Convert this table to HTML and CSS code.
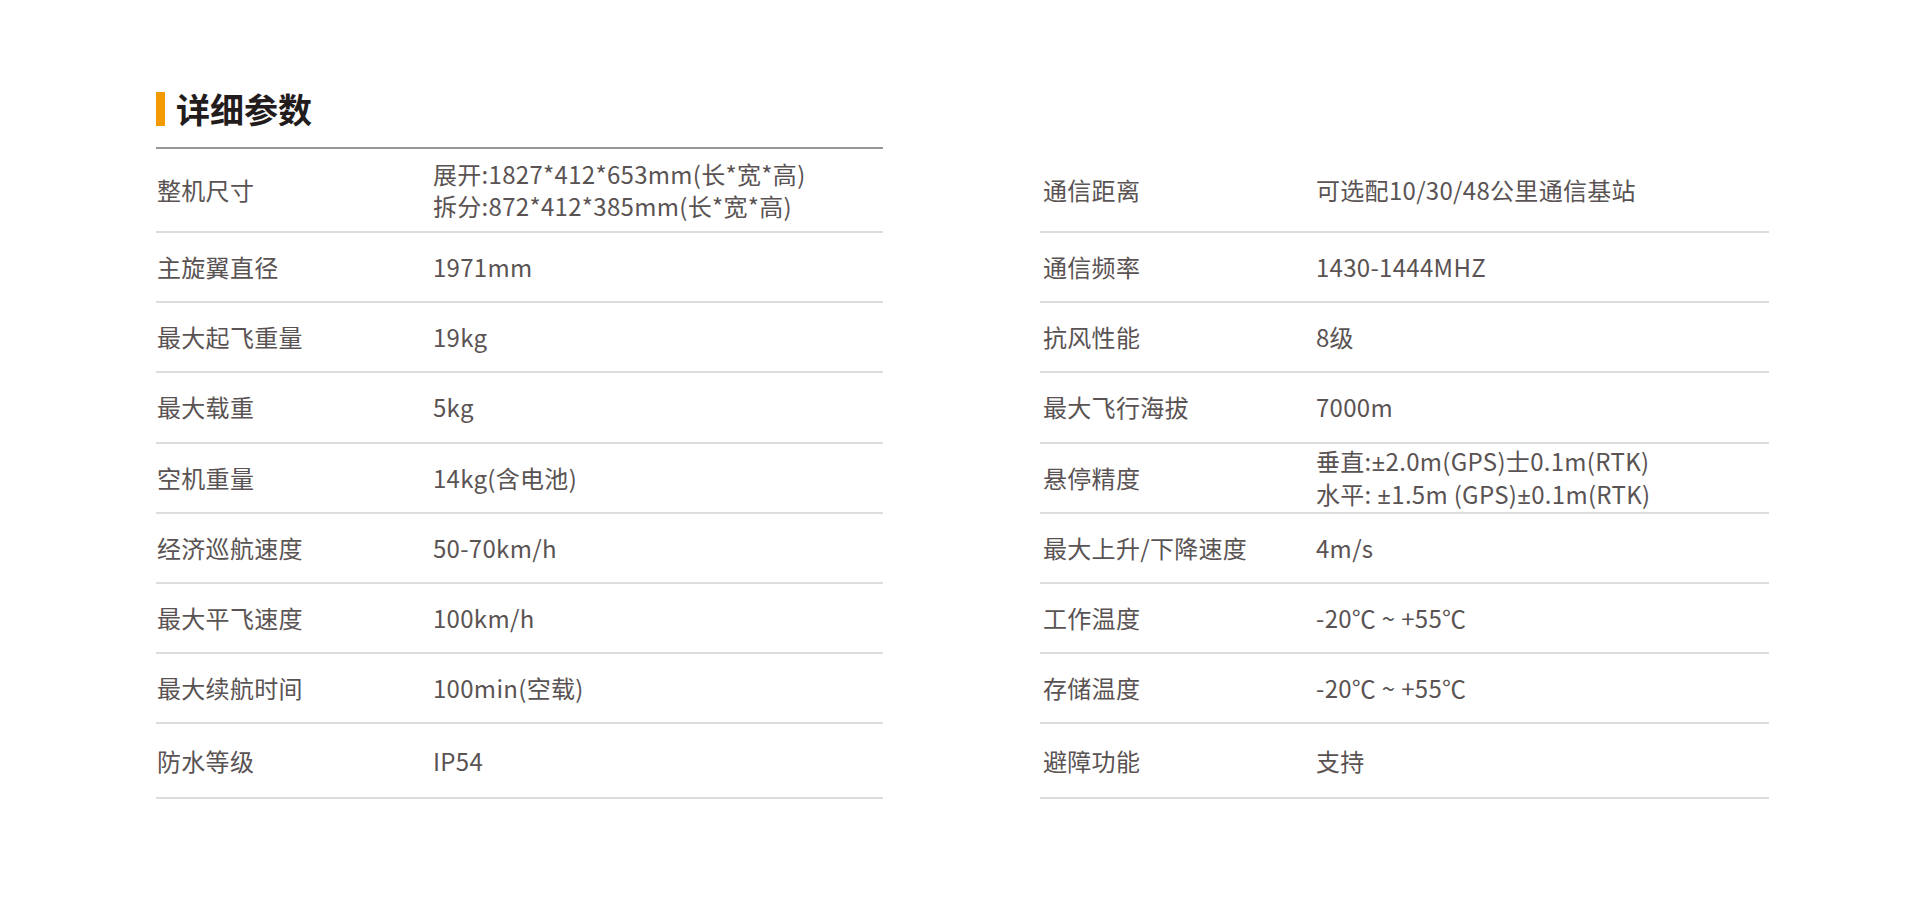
FILE: index.html
```html
<!DOCTYPE html>
<html lang="zh-CN">
<head>
<meta charset="utf-8">
<title>详细参数</title>
<link rel="stylesheet" href="styles.css">
</head>
<body>
<div class="page">
  <div class="heading">
    <span class="heading-bar"></span>
    <h2 class="heading-title">详细参数</h2>
  </div>
  <div class="tables">
    <div class="spec spec-left">
      <div class="row row-first"><div class="label">整机尺寸</div><div class="value">展开:1827*412*653mm(长*宽*高)<br>拆分:872*412*385mm(长*宽*高)</div></div>
      <div class="row"><div class="label">主旋翼直径</div><div class="value">1971mm</div></div>
      <div class="row"><div class="label">最大起飞重量</div><div class="value">19kg</div></div>
      <div class="row"><div class="label">最大载重</div><div class="value">5kg</div></div>
      <div class="row"><div class="label">空机重量</div><div class="value">14kg(含电池)</div></div>
      <div class="row"><div class="label">经济巡航速度</div><div class="value">50-70km/h</div></div>
      <div class="row"><div class="label">最大平飞速度</div><div class="value">100km/h</div></div>
      <div class="row"><div class="label">最大续航时间</div><div class="value">100min(空载)</div></div>
      <div class="row row-last"><div class="label">防水等级</div><div class="value">IP54</div></div>
    </div>
    <div class="spec spec-right">
      <div class="row row-first"><div class="label">通信距离</div><div class="value">可选配10/30/48公里通信基站</div></div>
      <div class="row"><div class="label">通信频率</div><div class="value">1430-1444MHZ</div></div>
      <div class="row"><div class="label">抗风性能</div><div class="value">8级</div></div>
      <div class="row"><div class="label">最大飞行海拔</div><div class="value">7000m</div></div>
      <div class="row"><div class="label">悬停精度</div><div class="value">垂直:<span class="pm">±</span>2.0m(GPS)士0.1m(RTK)<br>水平: <span class="pm">±</span>1.5m (GPS)<span class="pm">±</span>0.1m(RTK)</div></div>
      <div class="row"><div class="label">最大上升/下降速度</div><div class="value">4m/s</div></div>
      <div class="row"><div class="label">工作温度</div><div class="value">-20℃ ~ +55℃</div></div>
      <div class="row"><div class="label">存储温度</div><div class="value">-20℃ ~ +55℃</div></div>
      <div class="row row-last"><div class="label">避障功能</div><div class="value">支持</div></div>
    </div>
  </div>
</div>
</body>
</html>
```
FILE: styles.css
```css
* { box-sizing: border-box; }
html, body { margin: 0; padding: 0; background: #ffffff; }
body {
  font-family: "Noto Sans CJK SC", "Noto Sans", sans-serif;
  color: #5a5353;
}
.page {
  padding: 92px 0 0 156px;
}
.heading {
  display: flex;
  align-items: center;
  gap: 11px;
  height: 34px;
}
.heading-bar {
  display: block;
  width: 9px;
  height: 34px;
  background: #f39a00;
}
.heading-title {
  margin: 0;
  font-size: 34px;
  line-height: 34px;
  font-weight: 700;
  color: #231c1c;
}
.tables {
  display: flex;
  gap: 157px;
  margin-top: 21px;
}
.spec {
  border-top: 2px solid #9a9696;
}
.spec-left { width: 727px; }
.spec-right { width: 729px; border-top-color: transparent; }
.row {
  display: flex;
  align-items: center;
  height: 70.2px;
  border-bottom: 2px solid #dedddd;
  font-size: 24px;
  line-height: 32px;
  letter-spacing: 0.3px;
}
.row-first { height: 84px; }
.row-last { height: 75px; }
.label {
  width: 277px;
  flex: none;
  padding-left: 1px;
}
.spec-right .label { width: 276px; padding-left: 3px; }
.value { flex: 1; }
.pm { font-family: "Noto Sans", sans-serif; }
```
